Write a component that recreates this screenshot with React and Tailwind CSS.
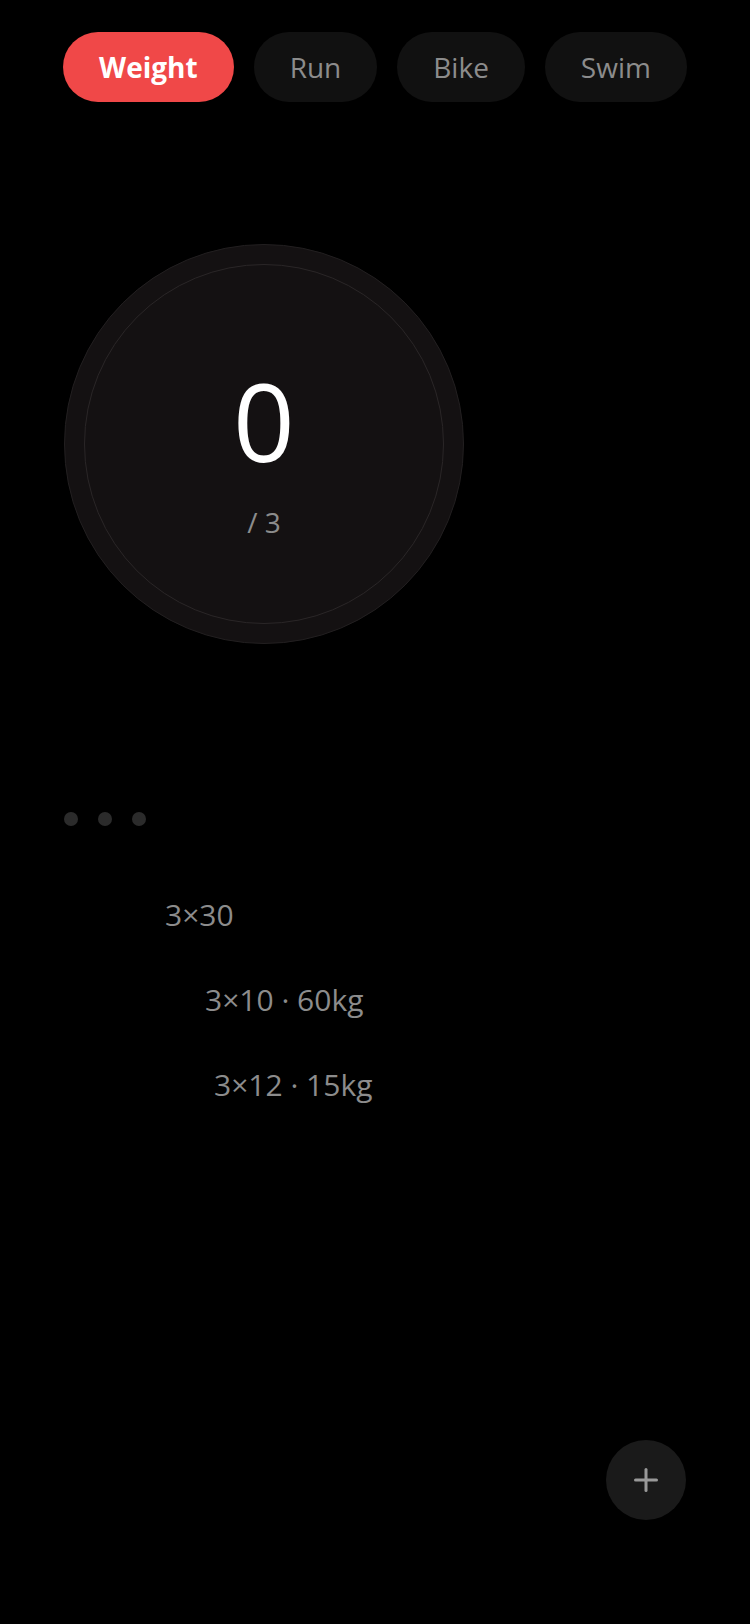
import { Plus } from "lucide-react";

const tabs = ["Weight", "Run", "Bike", "Swim"];

const sets = [
  { label: "3×30", indent: "ml-[101px]" },
  { label: "3×10 · 60kg", indent: "ml-[141px]" },
  { label: "3×12 · 15kg", indent: "ml-[150px]" },
];

const App = () => {
  return (
    <main
      className="relative min-h-screen bg-black text-white"
      style={{ fontFamily: '"Open Sans", "Noto Sans", sans-serif' }}
    >
      {/* Tabs */}
      <nav className="flex justify-center gap-5 pt-8">
        {tabs.map((tab, i) => (
          <button
            key={tab}
            className={
              i === 0
                ? "h-[70px] px-9 rounded-full bg-[#f04848] text-white font-bold text-[28px]"
                : "h-[70px] px-9 rounded-full bg-[#111111] text-[#8c8c8c] text-[28px]"
            }
          >
            {tab}
          </button>
        ))}
      </nav>

      {/* Counter */}
      <section className="pl-16 mt-[142px]">
        <div className="w-[400px] h-[400px] rounded-full bg-[#141112] border border-[#221f20] p-[19px]">
          <div className="w-full h-full rounded-full border border-[#2a2627] flex flex-col items-center justify-center pt-[22px]">
            <span className="text-[108px] leading-[108px] text-white">0</span>
            <span className="mt-[26px] text-[28px] leading-[42px] text-[#8c8c8c]">/ 3</span>
          </div>
        </div>
      </section>

      {/* Pager dots */}
      <div className="flex gap-5 pl-16 mt-[168px]">
        <span className="w-3.5 h-3.5 rounded-full bg-[#2b2b2b]" />
        <span className="w-3.5 h-3.5 rounded-full bg-[#2b2b2b]" />
        <span className="w-3.5 h-3.5 rounded-full bg-[#2b2b2b]" />
      </div>

      {/* Sets */}
      <ul className="pl-16 mt-[66px] flex flex-col gap-[40px]">
        {sets.map((s) => (
          <li key={s.label} className={`${s.indent} text-[30px] leading-[45px] text-[#8c8c8c]`}>
            {s.label}
          </li>
        ))}
      </ul>

      {/* Add button */}
      <button className="absolute right-16 bottom-[104px] w-20 h-20 rounded-full bg-[#1a1a1a] flex items-center justify-center text-[#999999]">
        <Plus size={36} strokeWidth={2} />
      </button>
    </main>
  );
};

export default App;
